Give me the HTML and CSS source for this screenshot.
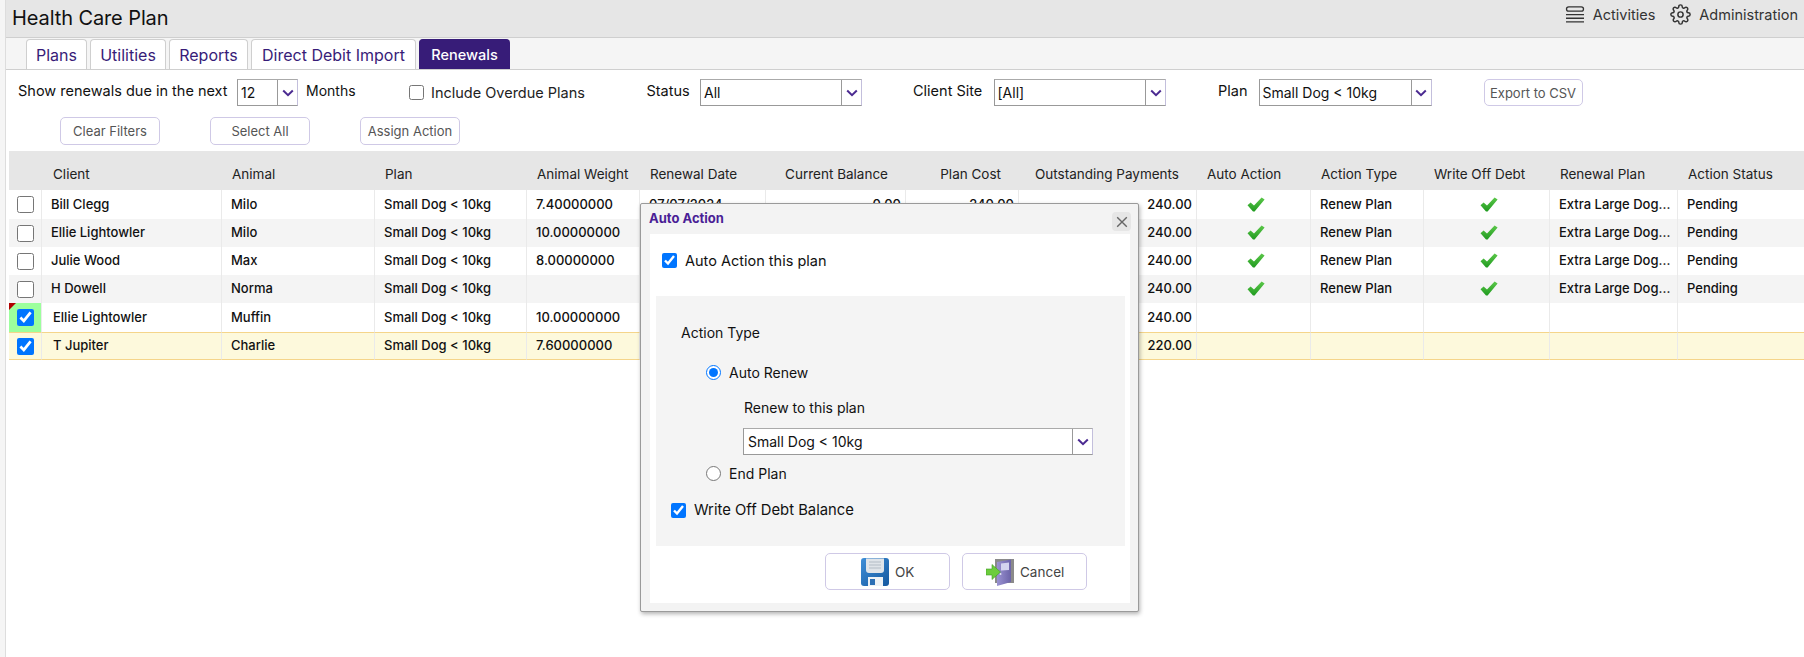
FILE: index.html
```html
<!DOCTYPE html>
<html lang="en">
<head>
<meta charset="utf-8">
<title>Health Care Plan</title>
<link rel="stylesheet" href="styles.css">
</head>
<body>
<svg class="defs" width="0" height="0" aria-hidden="true">
  <defs>
    <linearGradient id="tickGrad" x1="0" y1="0" x2="0" y2="1"><stop offset="0" stop-color="#5cc84a"/><stop offset="1" stop-color="#1f9a1f"/></linearGradient>
    <symbol id="tick" viewBox="0 0 18 15"><path d="M0.5 8.2 L3.6 5.4 L7 8.4 L14.6 0.5 L17.6 2.4 L7.6 14.6 L6 14.6 Z" fill="url(#tickGrad)"/></symbol>
    <symbol id="chev" viewBox="0 0 12 8"><path d="M1.2 1.5 L6 6.2 L10.8 1.5" fill="none" stroke="#4b2a91" stroke-width="2"/></symbol>
  </defs>
</svg>
<div class="page">
  <div class="gutter"></div>
  <main class="main">
    <header class="topbar">
      <div class="title">Health Care Plan</div>
      <nav class="topnav">
        <span class="topitem">
          <svg class="ico-act" viewBox="0 0 20 18"><rect x="1.5" y="0.8" width="17" height="4.4" rx="2.2" fill="none" stroke="#333" stroke-width="1.3"/><path d="M1 8.6H19M1 12.2H19M1 15.9H19" stroke="#333" stroke-width="1.4"/></svg>
          Activities
        </span>
        <span class="topitem">
          <svg class="ico-gear" viewBox="0 0 24 24" fill="none" stroke="#333" stroke-width="1.7"><circle cx="12" cy="12" r="3"/><path d="M19.4 15a1.65 1.65 0 0 0 .33 1.82l.06.06a2 2 0 0 1 0 2.83 2 2 0 0 1-2.83 0l-.06-.06a1.65 1.65 0 0 0-1.82-.33 1.65 1.65 0 0 0-1 1.51V21a2 2 0 0 1-2 2 2 2 0 0 1-2-2v-.09A1.65 1.65 0 0 0 9 19.4a1.65 1.65 0 0 0-1.82.33l-.06.06a2 2 0 0 1-2.83 0 2 2 0 0 1 0-2.83l.06-.06a1.65 1.65 0 0 0 .33-1.82 1.65 1.65 0 0 0-1.51-1H3a2 2 0 0 1-2-2 2 2 0 0 1 2-2h.09A1.65 1.65 0 0 0 4.6 9a1.65 1.65 0 0 0-.33-1.82l-.06-.06a2 2 0 0 1 0-2.83 2 2 0 0 1 2.83 0l.06.06a1.65 1.65 0 0 0 1.82.33H9a1.65 1.65 0 0 0 1-1.51V3a2 2 0 0 1 2-2 2 2 0 0 1 2 2v.09a1.65 1.65 0 0 0 1 1.51 1.65 1.65 0 0 0 1.82-.33l.06-.06a2 2 0 0 1 2.83 0 2 2 0 0 1 0 2.83l-.06.06a1.65 1.65 0 0 0-.33 1.82V9a1.65 1.65 0 0 0 1.51 1H21a2 2 0 0 1 2 2 2 2 0 0 1-2 2h-.09a1.65 1.65 0 0 0-1.51 1z"/></svg>
          Administration
        </span>
      </nav>
    </header>

    <div class="tabs">
      <span class="tab">Plans</span>
      <span class="tab">Utilities</span>
      <span class="tab">Reports</span>
      <span class="tab">Direct Debit Import</span>
      <span class="tab active">Renewals</span>
    </div>

    <div class="filters">
      <span class="lbl lbl-show">Show renewals due in the next</span>
      <span class="sel sel-months"><span class="sel-val">12</span><span class="sel-btn"><svg class="chev"><use href="#chev"/></svg></span></span>
      <span class="lbl lbl-months">Months</span>
      <label class="include"><input type="checkbox" class="cb15">Include Overdue Plans</label>
      <span class="lbl lbl-status">Status</span>
      <span class="sel sel-status"><span class="sel-val">All</span><span class="sel-btn"><svg class="chev"><use href="#chev"/></svg></span></span>
      <span class="lbl lbl-site">Client Site</span>
      <span class="sel sel-site"><span class="sel-val">[All]</span><span class="sel-btn"><svg class="chev"><use href="#chev"/></svg></span></span>
      <span class="lbl lbl-plan">Plan</span>
      <span class="sel sel-plan"><span class="sel-val">Small Dog &lt; 10kg</span><span class="sel-btn"><svg class="chev"><use href="#chev"/></svg></span></span>
      <button class="btn btn-export">Export to CSV</button>
    </div>

    <div class="actions">
      <button class="btn btn-act">Clear Filters</button>
      <button class="btn btn-act">Select All</button>
      <button class="btn btn-act">Assign Action</button>
    </div>

    <table class="grid">
      <colgroup>
        <col class="c1"><col class="c2"><col class="c3"><col class="c4"><col class="c5"><col class="c6"><col class="c7"><col class="c8"><col class="c9"><col class="c10"><col class="c11"><col class="c12"><col class="c13"><col class="c14">
      </colgroup>
      <thead>
        <tr>
          <th></th><th class="hc">Client</th><th>Animal</th><th>Plan</th><th>Animal Weight</th><th>Renewal Date</th>
          <th class="num">Current Balance</th><th class="num">Plan Cost</th><th class="num">Outstanding Payments</th>
          <th>Auto Action</th><th>Action Type</th><th>Write Off Debt</th><th>Renewal Plan</th><th>Action Status</th>
        </tr>
      </thead>
      <tbody>
        <tr class="tall">
          <td class="chk"><input type="checkbox"></td><td>Bill Clegg</td><td>Milo</td><td>Small Dog &lt; 10kg</td><td>7.40000000</td><td>07/07/2024</td>
          <td class="num">0.00</td><td class="num">240.00</td><td class="num">240.00</td>
          <td class="ctr"><svg class="tick"><use href="#tick"/></svg></td><td>Renew Plan</td><td class="ctr"><svg class="tick"><use href="#tick"/></svg></td><td>Extra Large Dog...</td><td>Pending</td>
        </tr>
        <tr class="alt">
          <td class="chk"><input type="checkbox"></td><td>Ellie Lightowler</td><td>Milo</td><td>Small Dog &lt; 10kg</td><td>10.00000000</td><td></td>
          <td class="num"></td><td class="num"></td><td class="num">240.00</td>
          <td class="ctr"><svg class="tick"><use href="#tick"/></svg></td><td>Renew Plan</td><td class="ctr"><svg class="tick"><use href="#tick"/></svg></td><td>Extra Large Dog...</td><td>Pending</td>
        </tr>
        <tr>
          <td class="chk"><input type="checkbox"></td><td>Julie Wood</td><td>Max</td><td>Small Dog &lt; 10kg</td><td>8.00000000</td><td></td>
          <td class="num"></td><td class="num"></td><td class="num">240.00</td>
          <td class="ctr"><svg class="tick"><use href="#tick"/></svg></td><td>Renew Plan</td><td class="ctr"><svg class="tick"><use href="#tick"/></svg></td><td>Extra Large Dog...</td><td>Pending</td>
        </tr>
        <tr class="alt">
          <td class="chk"><input type="checkbox"></td><td>H Dowell</td><td>Norma</td><td>Small Dog &lt; 10kg</td><td></td><td></td>
          <td class="num"></td><td class="num"></td><td class="num">240.00</td>
          <td class="ctr"><svg class="tick"><use href="#tick"/></svg></td><td>Renew Plan</td><td class="ctr"><svg class="tick"><use href="#tick"/></svg></td><td>Extra Large Dog...</td><td>Pending</td>
        </tr>
        <tr class="tall shift">
          <td class="chk flagged"><span class="flag"></span><input type="checkbox" checked></td><td>Ellie Lightowler</td><td>Muffin</td><td>Small Dog &lt; 10kg</td><td>10.00000000</td><td></td>
          <td class="num"></td><td class="num"></td><td class="num">240.00</td>
          <td></td><td></td><td></td><td></td><td></td>
        </tr>
        <tr class="picked shift">
          <td class="chk"><input type="checkbox" checked></td><td>T Jupiter</td><td>Charlie</td><td>Small Dog &lt; 10kg</td><td>7.60000000</td><td></td>
          <td class="num"></td><td class="num"></td><td class="num">220.00</td>
          <td></td><td></td><td></td><td></td><td></td>
        </tr>
      </tbody>
    </table>
  </main>
</div>

<section class="dialog">
  <div class="dlg-head">
    <span class="dlg-title">Auto Action</span>
    <span class="dlg-close"><svg viewBox="0 0 12 12"><path d="M1.2 1.2L10.8 10.8M10.8 1.2L1.2 10.8" stroke="#666" stroke-width="1.4"/></svg></span>
  </div>
  <div class="dlg-body">
    <label class="dlg-top"><input type="checkbox" class="cb15" checked>Auto Action this plan</label>
    <div class="panel">
      <div class="p-title">Action Type</div>
      <label class="p-radio p-radio-first"><input type="radio" name="act" checked>Auto Renew</label>
      <div class="p-renew">Renew to this plan</div>
      <span class="sel sel-renew"><span class="sel-val">Small Dog &lt; 10kg</span><span class="sel-btn"><svg class="chev"><use href="#chev"/></svg></span></span>
      <label class="p-radio p-radio-end"><input type="radio" name="act">End Plan</label>
      <label class="p-write"><input type="checkbox" class="cb15" checked>Write Off Debt Balance</label>
    </div>
    <div class="dlg-foot">
      <button class="btn dbtn">
        <svg class="dico" viewBox="0 0 28 28">
          <defs><linearGradient id="fl" x1="0" y1="0" x2="1" y2="1"><stop offset="0" stop-color="#3f8fd8"/><stop offset="1" stop-color="#14589f"/></linearGradient></defs>
          <path d="M3 0H25Q28 0 28 3V25Q28 28 25 28H3Q0 28 0 25V3Q0 0 3 0Z" fill="url(#fl)"/>
          <path d="M5 0.5H23V12Q23 15 20 15H8Q5 15 5 12Z" fill="#dfe4e9"/>
          <path d="M8 4H20M8 7H20M8 10H20" stroke="#b3bcc5" stroke-width="1.2"/>
          <rect x="7" y="19" width="15" height="9" fill="#eef2f5"/>
          <rect x="9" y="21" width="5" height="6" fill="#2b6fb4"/>
        </svg>
        OK
      </button>
      <button class="btn dbtn">
        <svg class="dico" viewBox="0 0 28 28">
          <defs><linearGradient id="dr" x1="0" y1="0" x2="1" y2="0"><stop offset="0" stop-color="#9a92d2"/><stop offset="1" stop-color="#6c64a8"/></linearGradient></defs>
          <path d="M9 1H28V25H9Z" fill="#8a8a8a"/>
          <path d="M11 4L25 1.500V24L11 28Z" fill="url(#dr)"/>
          <path d="M15 5.500L23 4.500V12L15 12.500Z" fill="#d4d5ee"/>
          <circle cx="14.500" cy="16" r="1" fill="#e3e3f2"/>
          <path d="M0 11H6V6.500L14.500 14L6 21.500V17H0Z" fill="#6ccc3c" stroke="#3f9f25" stroke-width="0.6"/>
        </svg>
        Cancel
      </button>
    </div>
  </div>
</section>
</body>
</html>
```

FILE: styles.css
```css
* { box-sizing: border-box; }
html, body { margin: 0; padding: 0; }
body {
  font-family: Inter, "Liberation Sans", sans-serif;
  font-size: 14px;
  color: #111;
  background: #fff;
  overflow: hidden;
}
.defs { position: absolute; }
.page { display: flex; min-height: 100vh; }
.gutter { flex: 0 0 6px; background: #f5f5f5; border-right: 1px solid #ddd; }
.main { flex: 1; min-width: 0; }

.topbar {
  height: 38px;
  background: #e6e6e6;
  border-bottom: 1px solid #cfcfcf;
  display: flex;
  align-items: center;
  justify-content: space-between;
  padding: 0 6px;
}
.title { font-size: 20px; letter-spacing: -0.1px; color: #111; padding-bottom: 2px; }
.topnav { display: flex; gap: 15px; font-size: 14.5px; color: #333; padding-bottom: 8px; }
.topitem { display: flex; align-items: center; gap: 8px; }
.ico-act { width: 20px; height: 18px; }
.ico-gear { width: 21px; height: 21px; }

.tabs {
  height: 32px;
  background: #f5f5f5;
  border-bottom: 1px solid #cfcfcf;
  display: grid;
  grid-template-columns: 61px 76px 79px 165px 91px;
  column-gap: 3px;
  padding: 1px 0 0 20px;
}
.tab {
  display: flex;
  align-items: center;
  justify-content: center;
  background: #fff;
  border: 1px solid #cfcfcf;
  border-bottom: 0;
  border-radius: 4px 4px 0 0;
  color: #371c78;
  font-size: 16px;
}
.tab.active { background: #371c78; border-color: #371c78; color: #fff; font-size: 14.5px; font-weight: 500; }

.filters {
  display: flex;
  align-items: center;
  height: 47px;
  padding: 9px 0 11px 12px;
  font-size: 14.5px;
}
.lbl { display: block; padding-bottom: 5px; white-space: nowrap; flex: none; }
.lbl-show { width: 219px; }
.lbl-months { width: 111px; padding-left: 8px; font-size: 14px; }
.lbl-status { width: 53.5px; }
.lbl-site { width: 80.5px; margin-left: 51px; }
.lbl-plan { width: 40.5px; margin-left: 52px; }
.include {
  display: flex;
  align-items: center;
  width: 237.5px;
  flex: none;
  color: #222;
}
.cb15 { width: 15px; height: 15px; margin: 0 7px 0 0; flex: none; }

.sel {
  display: flex;
  flex: none;
  height: 27px;
  background: #fff;
  border: 1px solid #999;
  border-right-color: #c3bfdc;
  border-top-color: #aaa;
}
.sel-val { flex: 1; padding: 0 3px; line-height: 25px; font-size: 14px; white-space: nowrap; overflow: hidden; }
.sel-btn { flex: 0 0 20px; border-left: 1px solid #999; display: flex; align-items: center; justify-content: center; }
.chev { width: 12px; height: 8px; }
.sel-months { width: 61px; }
.sel-status { width: 162px; }
.sel-site { width: 172.5px; }
.sel-plan { width: 173px; }
.sel-renew { width: 350px; margin: 10px 0 0 72px; }
.sel-renew .sel-val { padding-left: 4px; }

.btn {
  font-family: inherit;
  background: #fff;
  border: 1px solid #cfc9e6;
  border-radius: 5px;
  color: #555;
  font-size: 13px;
  padding: 0;
}
.btn-export { width: 99px; height: 27px; margin-left: 52px; flex: none; }
.actions { display: flex; gap: 50px; margin-left: 54px; height: 28px; }
.btn-act { width: 100px; height: 28px; }

.grid {
  table-layout: fixed;
  border-collapse: separate;
  border-spacing: 0;
  width: 1795px;
  margin: 6px 0 0 3px;
  font-size: 13px;
}
.c1 { width: 33px; } .c2 { width: 180px; } .c3 { width: 153px; } .c4 { width: 152px; }
.c5 { width: 113px; } .c6 { width: 126px; } .c7 { width: 140px; } .c8 { width: 113px; }
.c9 { width: 178px; } .c10 { width: 114px; } .c11 { width: 113px; } .c12 { width: 126px; }
.c13 { width: 128px; } .c14 { width: 126px; }
.grid thead tr { height: 39px; background: #e6e6e6; }
.grid th {
  font-weight: 400;
  font-size: 13.5px;
  color: #222;
  text-align: left;
  padding: 6px 4px 0 10px;
  white-space: nowrap;
  vertical-align: middle;
}
.grid th.hc { padding-left: 11px; }
.grid th.num { text-align: right; padding-right: 18px; }
.grid tbody tr { height: 28px; }
.grid tbody tr.tall { height: 29px; }
.grid td {
  padding: 0 4px 2px 9px;
  border-right: 1px solid #eaeaea;
  white-space: nowrap;
  overflow: hidden;
  vertical-align: middle;
  color: #111;
  font-weight: 500;
}
.grid td:last-child { border-right: 0; }
.grid td.num { text-align: right; padding-right: 4px; }
.grid td.ctr { text-align: center; padding: 0 0 2px 4px; }
.grid td.chk { padding: 0 0 0 8px; }
.grid td.chk input { display: block; width: 17px; height: 17px; margin: 0; }
.grid tr.alt td { background: #f4f4f4; }
.grid tr.shift td:nth-child(2) { padding-left: 11px; }
.grid tr.picked td {
  background: #fdf9dc;
  border-top: 1px solid #f5d58a;
  border-bottom: 1px solid #f5d58a;
}
.grid td.flagged { background: #9cff9c; position: relative; }
.flag {
  position: absolute;
  left: 0;
  top: 0;
  border-top: 7px solid #b00000;
  border-right: 7px solid transparent;
}
.tick { width: 18px; height: 15px; display: inline-block; vertical-align: middle; }

.dialog {
  position: absolute;
  left: 640px;
  top: 203px;
  width: 499px;
  height: 409px;
  background: #f3f3f3;
  border: 1px solid #9a9a9a;
  border-radius: 2px;
  box-shadow: 1px 2px 4px rgba(0,0,0,.3);
  padding: 0 8px 8px 9px;
  display: flex;
  flex-direction: column;
}
.dlg-head { height: 30px; flex: none; display: flex; align-items: center; justify-content: space-between; }
.dlg-title { font-size: 13px; font-weight: 700; color: #4a1e96; margin-left: -1px; padding-bottom: 3px; }
.dlg-close {
  width: 19px; height: 19px; background: #e6e6e6; border-radius: 4px;
  display: flex; align-items: center; justify-content: center;
  margin: 5px 0 0; margin-right: -1px;
}
.dlg-close svg { width: 12px; height: 12px; }
.dlg-body { flex: 1; background: #fff; display: flex; flex-direction: column; }
.dlg-top { display: flex; align-items: center; height: 62px; padding: 0 0 10px 12px; color: #111; font-size: 14.5px; }
.dlg-top .cb15 { margin-right: 8px; }
.panel { height: 250px; flex: none; margin: 0 5px 0 6px; background: #f4f4f4; padding: 27px 0 0 15px; }
.p-title { height: 20px; line-height: 20px; margin-left: 10px; }
.p-radio { display: flex; align-items: center; height: 20px; margin-left: 35px; }
.p-radio input { width: 15px; height: 15px; margin: 0 8px 0 0; }
.p-radio-first { margin-top: 19px; }
.p-radio-end { margin-top: 8px; }
.p-renew { height: 20px; line-height: 20px; margin: 16px 0 0 73px; }
.p-write { display: flex; align-items: center; height: 20px; margin-top: 17px; font-size: 14.8px; }
.p-write .cb15 { margin-right: 8px; }
.dlg-foot { flex: 1; display: flex; gap: 12px; padding: 7px 0 0 175px; }
.dbtn {
  width: 125px;
  height: 37px;
  display: flex;
  align-items: center;
  justify-content: flex-start;
  gap: 6px;
  font-size: 13.5px;
  color: #444;
}
.dbtn:first-child { padding-left: 35px; }
.dbtn:last-child { padding-left: 23px; }
.dico { width: 28px; height: 28px; flex: none; }
```
